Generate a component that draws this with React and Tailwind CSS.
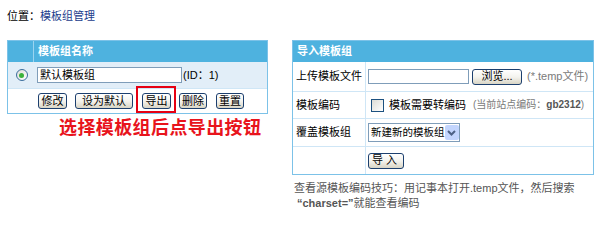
import React from "react";

const font = { fontFamily: '"Liberation Sans", "Noto Sans CJK SC", sans-serif' };

function XpButton({ children, className = "" }) {
  return (
    <div
      className={
        "flex h-[16px] shrink-0 items-center justify-center rounded-[3px] border border-[#1c3f6e] bg-gradient-to-b from-white via-[#f4f3ee] to-[#d9d5c5] text-[11px] leading-none text-black " +
        className
      }
    >
      {children}
    </div>
  );
}

export default function App() {
  return (
    <div className="h-[225px] w-[600px] whitespace-nowrap bg-white text-[11px] leading-none text-black" style={font}>
      <div className="flex h-[40px] items-start pl-[7px] pt-[11px]">
        <span>位置：</span>
        <span className="text-[#1a3c8c]">模板组管理</span>
      </div>

      <div className="flex items-start">
        {/* Left column */}
        <div className="ml-[7px] w-[261px] shrink-0">
          <div className="border border-[#7cc2e8]">
            <div className="flex h-[21px] bg-[#4eb2df]">
              <div className="w-[26px] border-r border-[#9bd4f0]" />
              <div className="flex items-center pl-[4px] font-bold text-white">模板组名称</div>
            </div>
            <div className="flex h-[26px] items-center bg-[#e2eef8]">
              <div className="flex w-[27px] justify-center">
                <div className="flex h-[12px] w-[12px] items-center justify-center rounded-full border border-[#3a6d9c] bg-gradient-to-br from-[#dcdcd6] to-white">
                  <div className="h-[5px] w-[5px] rounded-full bg-[#3bb23b]" />
                </div>
              </div>
              <div className="ml-[2px] flex h-[16px] w-[145px] items-center border border-[#7f9db9] bg-white pl-[2px]">
                默认模板组
              </div>
              <span className="ml-[1px]">(ID：1)</span>
            </div>
            <div className="flex h-[25px] items-center border-t border-[#cfe6f6] pl-[30px]">
              <XpButton className="w-[29px]">修改</XpButton>
              <XpButton className="ml-[8px] w-[58px]">设为默认</XpButton>
              <div className="relative ml-[9px] w-[29px]">
                <XpButton className="w-[29px]">导出</XpButton>
                <div className="absolute left-[-6px] top-[-7px] h-[27px] w-[40px] border-2 border-[#e60012]" />
              </div>
              <XpButton className="ml-[8px] w-[28px]">删除</XpButton>
              <XpButton className="ml-[9px] w-[28px]">重置</XpButton>
            </div>
          </div>
          <div className="mt-[4px] pl-[52px] text-[18px] font-bold leading-[20px] tracking-[0.4px] text-[#e8141c]">
            选择模板组后点导出按钮
          </div>
        </div>

        {/* Right column */}
        <div className="ml-[24px] w-[302px] shrink-0">
          <div className="border border-[#7cc2e8]">
            <div className="flex h-[21px] items-center bg-[#4eb2df] pl-[4px] font-bold text-white">导入模板组</div>
            <div className="flex h-[29px]">
              <div className="flex w-[73px] shrink-0 items-center border-r border-[#cfe6f6] pl-[3px]">上传模板文件</div>
              <div className="flex items-center pl-[2px]">
                <div className="h-[15px] w-[101px] shrink-0 border border-[#7f9db9] bg-white" />
                <XpButton className="ml-[3px] w-[50px]">浏览...</XpButton>
                <span className="ml-[5px] text-[#7a7a7a]">(*.temp文件)</span>
              </div>
            </div>
            <div className="flex h-[27px] border-t border-[#cfe6f6]">
              <div className="flex w-[73px] shrink-0 items-center border-r border-[#cfe6f6] pl-[3px]">模板编码</div>
              <div className="flex items-center pl-[5px]">
                <div className="h-[13px] w-[13px] shrink-0 border border-[#1c5180] bg-gradient-to-br from-[#dcdcd6] to-white" />
                <span className="ml-[5px]">模板需要转编码</span>
                <span className="ml-[7px] text-[10px] text-[#7a7a7a]">
                  (当前站点编码：<span className="font-bold text-[#555]">gb2312</span>)
                </span>
              </div>
            </div>
            <div className="flex h-[28px] border-t border-[#cfe6f6]">
              <div className="flex w-[73px] shrink-0 items-center border-r border-[#cfe6f6] pl-[3px]">覆盖模板组</div>
              <div className="flex items-center pl-[2px]">
                <div className="flex h-[19px] w-[92px] items-center justify-between border border-[#7f9db9] bg-white pl-[2px] pr-[1px]">
                  <span className="text-[10.5px]">新建新的模板组</span>
                  <div className="flex h-[15px] w-[14px] shrink-0 items-center justify-center rounded-[2px] bg-[#c3d5fd]">
                    <svg width="9" height="6" viewBox="0 0 9 6">
                      <path d="M1 1 L4.5 4.5 L8 1" stroke="#4d6185" strokeWidth="2" fill="none" />
                    </svg>
                  </div>
                </div>
              </div>
            </div>
            <div className="flex h-[28px] border-t border-[#cfe6f6]">
              <div className="w-[73px] shrink-0 border-r border-[#cfe6f6]" />
              <div className="flex items-center pl-[2px]">
                <XpButton className="w-[36px] tracking-[3px]">导入</XpButton>
              </div>
            </div>
          </div>
          <div className="mt-[6px] pl-[2px] leading-[15px] text-[#555]">
            <div>查看源模板编码技巧：用记事本打开.temp文件，然后搜索</div>
            <div className="pl-[3px]">
              <span className="font-semibold">“charset=”</span>就能查看编码
            </div>
          </div>
        </div>
      </div>
    </div>
  );
}
